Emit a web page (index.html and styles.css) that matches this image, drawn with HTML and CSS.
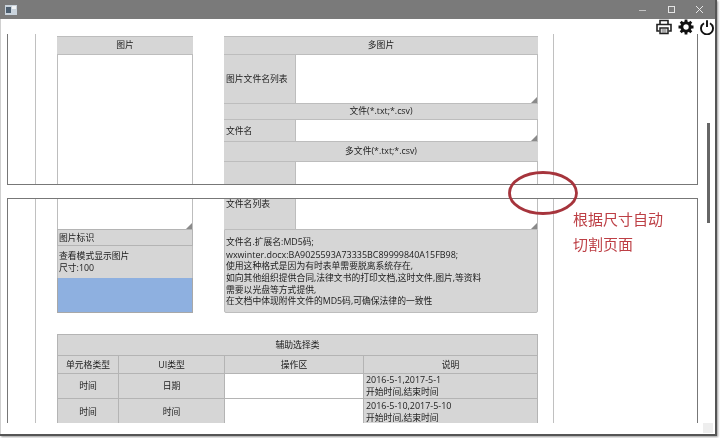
FILE: index.html
```html
<!DOCTYPE html>
<html lang="zh">
<head>
<meta charset="utf-8">
<title>根据尺寸自动切割页面</title>
<link rel="stylesheet" href="styles.css">
</head>
<body>
<div class="window">
  <header class="titlebar">
    <svg class="app-icon" width="12" height="10" viewBox="0 0 12 10"><rect width="12" height="10" fill="#c9d3dc"/><rect x="1" y="2" width="5" height="6" fill="#4d5f70"/><rect x="7" y="1" width="4" height="3" fill="#f2f4f6"/></svg>
    <div class="controls">
      <svg width="10" height="10" viewBox="0 0 10 10"><path d="M1 5.500H8" stroke="#c4c4c4" fill="none"/></svg>
      <svg width="10" height="10" viewBox="0 0 10 10"><rect x="1.500" y="1.500" width="6" height="6" stroke="#e4e4e4" fill="none"/></svg>
      <svg width="10" height="10" viewBox="0 0 10 10"><path d="M1 1L8 8M8 1L1 8" stroke="#e8e8e8" fill="none"/></svg>
    </div>
  </header>

  <main class="viewport">
    <section class="sheet sheet-top">
      <div class="rules rules-top">
        <div class="panel panel-image">
          <div class="head">图片</div>
          <div class="field fill"></div>
        </div>
        <div class="panel panel-files">
          <div class="head">多图片</div>
          <div class="row h48"><div class="label">图片文件名列表</div><div class="input grip"></div></div>
          <div class="head h17">文件(*.txt;*.csv)</div>
          <div class="row h21"><div class="label">文件名</div><div class="input grip"></div></div>
          <div class="head h21">多文件(*.txt;*.csv)</div>
          <div class="row fill"><div class="label"></div><div class="input"></div></div>
        </div>
      </div>
    </section>

    <section class="sheet sheet-bottom">
      <div class="rules">
        <div class="columns">
          <div class="panel panel-image">
            <div class="field h30 grip"></div>
            <div class="caption">图片标识</div>
            <div class="caption-note"><p>查看模式显示图片<br>尺寸:100</p></div>
            <div class="swatch"></div>
          </div>
          <div class="panel panel-files">
            <div class="row h30"><div class="label label-top">文件名列表</div><div class="input grip"></div></div>
            <div class="note"><p>文件名.扩展名:MD5码;<br><span class="latin">wxwinter.docx:BA9025593A73335BC89999840A15FB98;</span><br>使用这种格式是因为有时表单需要脱离系统存在,<br>如向其他组织提供合同,法律文书的打印文档,这时文件,图片,等资料<br>需要以光盘等方式提供,<br>在文档中体现附件文件的MD5码,可确保法律的一致性</p></div>
          </div>
        </div>
        <table class="grid">
          <colgroup><col class="c1"><col class="c2"><col class="c3"><col class="c4"></colgroup>
          <tr class="r-title"><th colspan="4">辅助选择类</th></tr>
          <tr class="r-head"><th>单元格类型</th><th>UI类型</th><th>操作区</th><th>说明</th></tr>
          <tr class="r-body"><td>时间</td><td>日期</td><td class="blank"></td><td class="desc"><span class="latin">2016-5-1,2017-5-1</span><br>开始时间,结束时间</td></tr>
          <tr class="r-body r-last"><td>时间</td><td>时间</td><td class="blank"></td><td class="desc"><span class="latin">2016-5-10,2017-5-10</span><br>开始时间,结束时间</td></tr>
        </table>
      </div>
    </section>
  </main>

  <div class="toolbar">
    <svg width="16" height="16" viewBox="0 0 16 16"><path d="M4 5V1.500H12V5M3.500 12H1V5.500H15V12H12.500" fill="none" stroke="#222" stroke-width="1.600"/><rect x="4" y="9" width="8" height="5.500" fill="#fff" stroke="#222" stroke-width="1.500"/><path d="M5.500 11H10.500M5.500 13H10.500" stroke="#555"/></svg>
    <svg width="16" height="16" viewBox="0 0 16 16"><circle cx="8" cy="8" r="4.200" fill="none" stroke="#111" stroke-width="3"/><path d="M8 .500V3M8 13V15.500M.500 8H3M13 8H15.500M2.700 2.700L4.500 4.500M11.500 11.500L13.300 13.300M13.300 2.700L11.500 4.500M4.500 11.500L2.700 13.300" stroke="#111" stroke-width="2.800"/></svg>
    <svg width="14" height="15" viewBox="0 0 14 15"><path d="M4 3.200A6 6 0 1 0 10 3.200" fill="none" stroke="#111" stroke-width="1.900"/><path d="M7 .200V7" stroke="#111" stroke-width="1.900"/></svg>
  </div>

  <div class="thumb"></div>
  <div class="scroll-corner"></div>

  <svg class="ring" width="76" height="50" viewBox="0 0 76 50"><ellipse cx="38" cy="25" rx="33.500" ry="20.500" fill="none" stroke="#a6343c" stroke-width="2.800"/></svg>
  <div class="remark"><span>根据尺寸自动</span><span>切割页面</span></div>
</div>
</body>
</html>
```
FILE: styles.css
```css
* { box-sizing: border-box; }
html, body { margin: 0; height: 100%; background: #fff; overflow: hidden; }
body { font: 8.800px/11.600px "Open Sans", "Noto Sans CJK SC", sans-serif; color: #1c1c1c; }
p { margin: 0; }
.latin { font-size: 8.950px; }

.window {
  position: relative;
  width: 717px;
  height: 436px;
  display: flex;
  flex-direction: column;
  border-right: 2px solid #555;
  border-bottom: 2px solid #555;
  box-shadow: 1px 1px 2px #999, inset 1px 0 0 #d0d0d0;
  filter: blur(0.35px);
}

.titlebar {
  height: 19px;
  flex: none;
  background: #7a7a7a;
  display: flex;
  align-items: center;
  justify-content: space-between;
  padding-left: 5px;
}
.controls { display: flex; gap: 18.500px; padding-right: 10px; }

.viewport {
  flex: 1;
  min-height: 0;
  display: flex;
  flex-direction: column;
  gap: 13px;
  padding: 15px 0 11px 7px;
}
.sheet {
  width: 691px;
  padding-left: 27px;
  border: solid #777;
  border-width: 0 1.500px;
  overflow: hidden;
}
.sheet-top { height: 151px; flex: none; border-bottom-width: 1.500px; }
.sheet-bottom { flex: 1; min-height: 0; border-top-width: 1px; }

.rules {
  width: 519px;
  height: 100%;
  padding-left: 21px;
  border: solid #c0c0c0;
  border-width: 0 1px;
  overflow: hidden;
}
.rules-top { display: flex; gap: 31px; padding-top: 2px; }
.columns { display: flex; gap: 31px; }

.panel { display: flex; flex-direction: column; flex: none; }
.panel-image { width: 136px; }
.panel-files { width: 314px; }

.head {
  height: 19px;
  flex: none;
  display: flex;
  align-items: center;
  justify-content: center;
  padding-top: 1px;
  background: #d6d6d6;
  border: 1px solid #bdbdbd;
  border-width: 1px 0;
}
.h17 { height: 17px; }
.h21 { height: 21px; }
.h30 { height: 30px; }
.h48 { height: 48px; }
.fill { flex: 1; min-height: 0; }

.field { background: #fff; border: solid #bdbdbd; border-width: 0 1px; position: relative; }
.row { display: flex; flex: none; }
.row.fill { flex: 1; }
.label {
  width: 72px;
  flex: none;
  padding: 2px 0 0 2px;
  display: flex;
  align-items: center;
  background: #d6d6d6;
  border-right: 1px solid #bdbdbd;
}
.label.label-top { align-items: flex-start; padding-top: 0; line-height: 10px; }
.input { flex: 1; background: #fff; border-right: 1px solid #bdbdbd; position: relative; }

.grip::after {
  content: "";
  position: absolute;
  right: 0;
  bottom: 0;
  width: 6px;
  height: 6px;
  background: #8a8a8a;
  clip-path: polygon(100% 0, 100% 100%, 0 100%);
}

.caption {
  height: 17px;
  display: flex;
  align-items: center;
  padding: 2px 0 0 1px;
  background: #d6d6d6;
  border: 1px solid #b4b4b4;
}
.caption-note {
  height: 32px;
  display: flex;
  align-items: center;
  padding: 2px 0 0 1px;
  background: #d6d6d6;
  border: solid #bdbdbd;
  border-width: 0 1px;
}
.swatch { height: 35px; background: #8eb0e0; border: solid #a8a8a8; border-width: 0 1px 1px; }

.note {
  height: 84px;
  display: flex;
  align-items: center;
  padding: 3px 0 0 1px;
  background: #d6d6d6;
  border: 1px solid #bdbdbd;
  border-radius: 0 0 2px 2px;
  white-space: nowrap;
}

.grid {
  width: 480px;
  margin-top: 21px;
  border-collapse: collapse;
  table-layout: fixed;
}
.c1 { width: 61px; }
.c2 { width: 106px; }
.c3 { width: 139px; }
.c4 { width: 174px; }
.grid th, .grid td {
  padding: 2px 0 0;
  font-weight: 400;
  text-align: center;
  background: #d6d6d6;
  border: 1px solid #b4b4b4;
}
.grid td.blank { background: #fff; }
.grid td.desc { text-align: left; padding: 0 0 0 2px; }
.r-title { height: 21px; }
.r-head { height: 18px; }
.r-body { height: 25px; }
.grid .r-last td.desc { padding: 1px 0 0 2px; }

.toolbar {
  position: absolute;
  top: 19px;
  right: 1px;
  display: flex;
  gap: 6px;
  align-items: center;
}

.thumb { position: absolute; top: 123px; left: 707px; width: 3px; height: 100px; background: #666; }
.scroll-corner { position: absolute; right: 2px; bottom: 1px; width: 10px; height: 10px; background: #eee; }

.ring { position: absolute; left: 505px; top: 168px; }
.remark {
  position: absolute;
  left: 573px;
  top: 208px;
  display: flex;
  flex-direction: column;
  gap: 4px;
  font: 15px/21px "Noto Sans CJK SC", sans-serif;
  color: #bd3f45;
}
```
